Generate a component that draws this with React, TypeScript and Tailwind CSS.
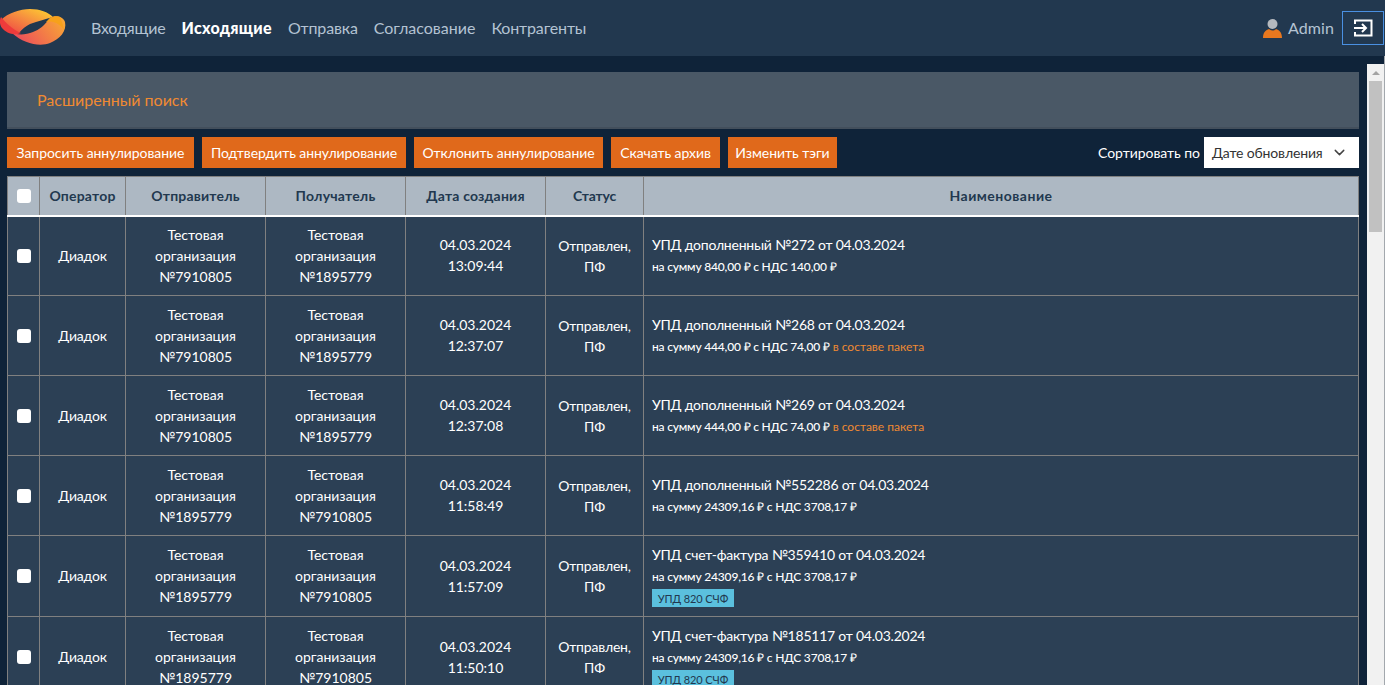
import { ChevronDown } from 'lucide-react';

type Row = {
  from: string;
  to: string;
  date: string;
  time: string;
  title: string;
  sum: string;
  pack?: boolean;
  tag?: boolean;
};

const rows: Row[] = [
  { from: '7910805', to: '1895779', date: '04.03.2024', time: '13:09:44', title: 'УПД дополненный №272 от 04.03.2024', sum: 'на сумму 840,00 ₽ с НДС 140,00 ₽' },
  { from: '7910805', to: '1895779', date: '04.03.2024', time: '12:37:07', title: 'УПД дополненный №268 от 04.03.2024', sum: 'на сумму 444,00 ₽ с НДС 74,00 ₽', pack: true },
  { from: '7910805', to: '1895779', date: '04.03.2024', time: '12:37:08', title: 'УПД дополненный №269 от 04.03.2024', sum: 'на сумму 444,00 ₽ с НДС 74,00 ₽', pack: true },
  { from: '1895779', to: '7910805', date: '04.03.2024', time: '11:58:49', title: 'УПД дополненный №552286 от 04.03.2024', sum: 'на сумму 24309,16 ₽ с НДС 3708,17 ₽' },
  { from: '1895779', to: '7910805', date: '04.03.2024', time: '11:57:09', title: 'УПД счет-фактура №359410 от 04.03.2024', sum: 'на сумму 24309,16 ₽ с НДС 3708,17 ₽', tag: true },
  { from: '1895779', to: '7910805', date: '04.03.2024', time: '11:50:10', title: 'УПД счет-фактура №185117 от 04.03.2024', sum: 'на сумму 24309,16 ₽ с НДС 3708,17 ₽', tag: true },
];

const nav = [
  { label: 'Входящие', cls: 'tracking-[-0.15px]' },
  { label: 'Исходящие', cls: 'font-black tracking-[0.3px] text-white' },
  { label: 'Отправка', cls: 'tracking-[-0.15px]' },
  { label: 'Согласование', cls: 'tracking-normal' },
  { label: 'Контрагенты', cls: 'tracking-[-0.15px]' },
];
const actions = [
  { label: 'Запросить аннулирование', width: 'w-[187px]' },
  { label: 'Подтвердить аннулирование', width: 'w-[204px]' },
  { label: 'Отклонить аннулирование', width: 'w-[189px]' },
  { label: 'Скачать архив', width: 'w-[109px]' },
  { label: 'Изменить тэги', width: 'w-[109px]' },
];
const columns = [
  { label: 'Оператор', spacing: 'tracking-[0.2px]' },
  { label: 'Отправитель', spacing: 'tracking-[0.2px]' },
  { label: 'Получатель', spacing: 'tracking-[0.2px]' },
  { label: 'Дата создания', spacing: 'tracking-[0.2px]' },
  { label: 'Статус', spacing: 'tracking-[-0.2px]' },
  { label: 'Наименование', spacing: 'tracking-[0.5px]' },
];

function Logo() {
  return (
    <svg width="68" height="46" viewBox="0 5 68 46" className="shrink-0">
      <defs>
        <linearGradient id="lg1" x1="0" y1="1" x2="1" y2="0">
          <stop offset="0" stopColor="#ee3f45" />
          <stop offset="0.55" stopColor="#f6913f" />
          <stop offset="1" stopColor="#ffd62e" />
        </linearGradient>
        <linearGradient id="lg2" x1="0" y1="0.7" x2="1" y2="0.3">
          <stop offset="0" stopColor="#ec4a5c" />
          <stop offset="1" stopColor="#f8a536" />
        </linearGradient>
      </defs>
      <path d="M1 20C8 13 20 9 30 9C40 9 48 12 53 17C46 19 38 21 30 24C26 26 22 29 19 33C12 30 6 26 1 20Z" fill="url(#lg1)" />
      <path d="M12 33C18 35 26 35 33 32C39 30 45 25 50 18C55 15 63 16 65 22C67 31 60 39 50 43C40 47 24 44 12 33Z" fill="url(#lg2)" />
      <path d="M1 17C6 23 12 29 21 33C14 36 6 33 2 28C0 25 -1 21 1 17Z" fill="#ee3b3b" />
      <path d="M50 18C54 16 57 16 60 17C62 22 63 25 64 30C60 24 54 20 46 22Z" fill="#f7a11a" />
    </svg>
  );
}

export default function App() {
  return (
    <div className="h-[685px] w-[1385px] overflow-hidden bg-[#0f2339] font-['Lato','Carlito','Open_Sans',sans-serif] text-[14px] text-white">
      <header className="flex h-[56px] items-center bg-[#22384f]">
        <Logo />
        <nav className="ml-[23px] flex gap-4 text-[16px] text-[#b4c3d3]">
          {nav.map((n) => (
            <span key={n.label} className={n.cls}>{n.label}</span>
          ))}
        </nav>
        <div className="ml-auto flex items-center">
          <svg width="19" height="20" viewBox="0 0 19 20" className="mr-[6px]">
            <circle cx="9.5" cy="6" r="5" fill="#b5b9be" />
            <path d="M0 20C0 14 3 12 6 11C8 13 11 13 13 11C16 12 19 14 19 20Z" fill="#e8781f" />
          </svg>
          <span className="text-[16px] tracking-[0.1px] text-[#b4c3d3]">Admin</span>
          <button className="ml-2 mr-[1px] flex h-[34px] w-[42px] items-center justify-center border border-[#4a90e2]">
            <svg width="20" height="18" viewBox="0 0 20 18" fill="none" stroke="#fff" strokeWidth="2">
              <path d="M2 5V1.5H18.5V16.5H2V13" />
              <path d="M1 9H12M9 5L13 9L9 13" />
            </svg>
          </button>
        </div>
      </header>

      <div className="flex h-[629px] border-r border-[#a3a8ad]">
        <main className="w-[1367px] shrink-0 overflow-hidden pl-[7px] pr-2 pt-4">
          <div className="flex h-[57px] items-center border-b-2 border-[#434f5c] bg-[#4a5866] pl-[30px] pt-[1px] text-[16px] text-[#f08a32]">
            Расширенный поиск
          </div>

          <div className="mt-2 flex h-[31px] items-center">
            <div className="flex gap-2">
              {actions.map((a) => (
                <button key={a.label} className={`h-[31px] bg-[#e0691b] text-[14px] tracking-[-0.06px] text-white ${a.width}`}>{a.label}</button>
              ))}
            </div>
            <span className="ml-auto mr-1 text-[14px] tracking-[-0.05px]">Сортировать по</span>
            <div className="flex h-[31px] w-[155px] items-center justify-between bg-white pl-2 pr-[11px] text-[14px] tracking-[-0.15px] text-[#333]">
              Дате обновления
              <ChevronDown size={17} strokeWidth={2} className="text-[#444]" />
            </div>
          </div>

          <table className="mt-[8px] w-[1352px] table-fixed border-collapse">
            <colgroup>
              <col className="w-[32px]" />
              <col className="w-[86px]" />
              <col className="w-[140px]" />
              <col className="w-[140px]" />
              <col className="w-[140px]" />
              <col className="w-[98px]" />
              <col />
            </colgroup>
            <thead>
              <tr className="h-[39px] border-b-2 border-b-white bg-[#adb8c3] text-[14px] font-bold text-[#22384f]">
                <th className="border border-b-0 border-[#808080] pt-[1px] text-center">
                  <span className="mx-auto block h-[14px] w-[14px] rounded-[3px] bg-white" />
                </th>
                {columns.map((c) => (
                  <th key={c.label} className={`border border-b-0 border-[#808080] text-center ${c.spacing}`}>{c.label}</th>
                ))}
              </tr>
            </thead>
            <tbody>
              {rows.map((r) => {
                const pad = r.tag ? 'pb-[1px]' : '';
                return (
                  <tr key={r.title} className={`bg-[#2c4055] text-center leading-[21px] ${r.tag ? 'h-[81px]' : 'h-[80px]'}`}>
                    <td className="border border-[#808080]">
                      <span className="mx-auto block h-[14px] w-[14px] rounded-[3px] bg-white" />
                    </td>
                    <td className={`border border-[#808080] tracking-[-0.2px] ${pad}`}>Диадок</td>
                    <td className={`border border-[#808080] ${pad}`}>Тестовая<br />организация<br />№{r.from}</td>
                    <td className={`border border-[#808080] ${pad}`}>Тестовая<br />организация<br />№{r.to}</td>
                    <td className="border border-[#808080] pb-[1px]">{r.date}<br />{r.time}</td>
                    <td className="border border-[#808080] tracking-[-0.2px]">Отправлен,<br />ПФ</td>
                    <td className="border border-[#808080] pl-2 text-left">
                      <div className="pb-[1px] leading-[20px] tracking-[-0.23px]">{r.title}</div>
                      <div className="text-[12px] font-medium leading-[21px] tracking-[-0.19px]">
                        {r.sum}
                        {r.pack && <span className="font-normal tracking-normal text-[#f08a32]"> в составе пакета</span>}
                      </div>
                      {r.tag && (
                        <div className="mt-[2px] flex h-[18px] w-[82px] items-center justify-center bg-[#5bc0de] text-[11px] tracking-[-0.1px] text-[#22384f]">УПД 820 СЧФ</div>
                      )}
                    </td>
                  </tr>
                );
              })}
            </tbody>
          </table>
        </main>

        <div className="mt-2 flex w-[17px] shrink-0 flex-col items-center bg-[#f1f1f1]">
          <span className="mt-[7px] h-0 w-0 border-x-[4px] border-b-[4px] border-x-transparent border-b-[#a3a3a3]" />
          <span className="mt-[6px] h-[151px] w-[13px] bg-[#c1c1c1]" />
        </div>
      </div>
    </div>
  );
}
